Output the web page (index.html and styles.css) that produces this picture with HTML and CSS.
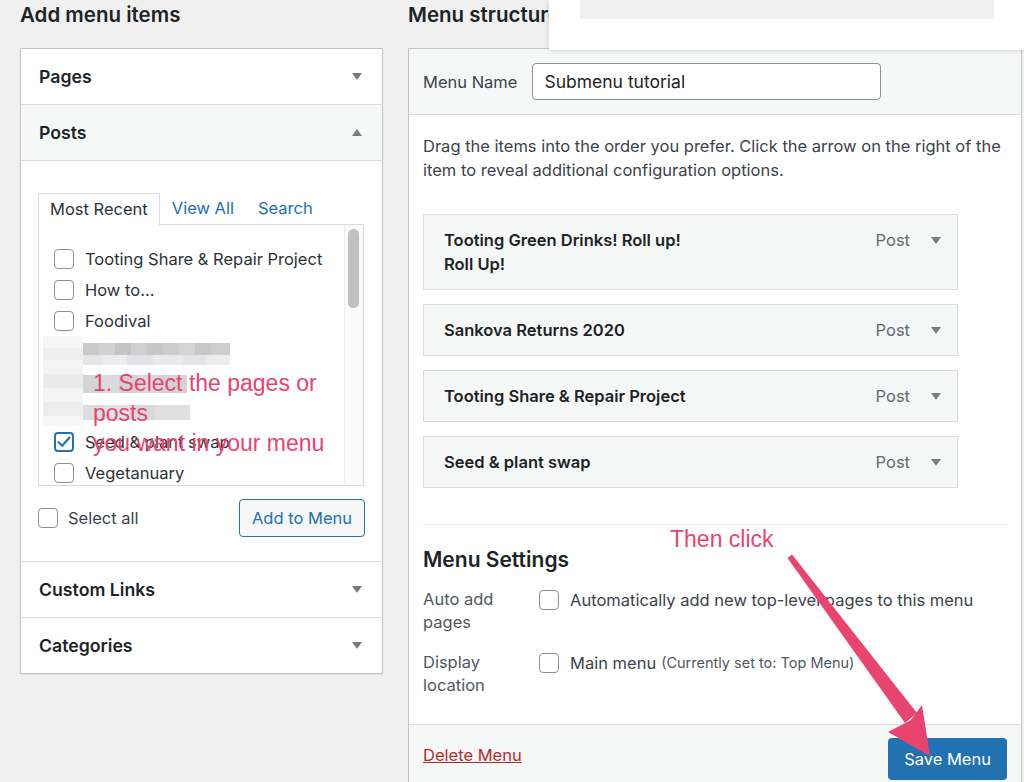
FILE: index.html
```html
<!DOCTYPE html>
<html lang="en-US">

<head>
    <meta charset="UTF-8">
    <meta name="viewport" content="width=device-width, initial-scale=1">
    <title>Menus</title>
    <link rel="stylesheet" href="styles.css">
</head>

<body>
    <div class="page">
        <div class="col-left">
            <h2 class="col-title">Add menu items</h2>
            <div class="accordion">
                <div class="acc-section">
                    <div class="acc-head">
                        <h3>Pages</h3>
                        <span class="tri tri-down"></span>
                    </div>
                </div>
                <div class="acc-section open">
                    <div class="acc-head">
                        <h3>Posts</h3>
                        <span class="tri tri-up"></span>
                    </div>
                    <div class="acc-body">
                        <ul class="tabs">
                            <li class="tab active">Most Recent</li>
                            <li class="tab">View All</li>
                            <li class="tab">Search</li>
                        </ul>
                        <div class="post-list">
                            <div class="post-items">
                                <label class="post-item"><span class="cb"></span>Tooting Share &amp; Repair Project</label>
                                <label class="post-item"><span class="cb"></span>How to…</label>
                                <label class="post-item"><span class="cb"></span>Foodival</label>
                                <div class="blurred">
                                    <div class="blur-side"></div>
                                    <div class="blur-bars">
                                        <div class="blur-bar bar-one"></div>
                                        <div class="blur-bar bar-one-light"></div>
                                        <div class="blur-bar bar-two"></div>
                                        <div class="blur-bar bar-three"></div>
                                    </div>
                                </div>
                                <label class="post-item">
                                    <span class="cb checked">
                                        <svg width="16" height="16" viewBox="0 0 16 16"><path d="M2.5 8.2 L6.2 11.8 L13.5 3.6" fill="none" stroke="#2271b1" stroke-width="2.2" stroke-linecap="round" stroke-linejoin="round"/></svg>
                                    </span>Seed &amp; plant swap
                                </label>
                                <label class="post-item"><span class="cb"></span>Vegetanuary</label>
                            </div>
                            <div class="scroll-track">
                                <div class="scroll-thumb"></div>
                            </div>
                            <p class="note note-select">1. Select the pages or posts<br>you want in your menu</p>
                        </div>
                        <div class="list-actions">
                            <label class="select-all"><span class="cb"></span>Select all</label>
                            <button class="add-btn">Add to Menu</button>
                        </div>
                    </div>
                </div>
                <div class="acc-section">
                    <div class="acc-head">
                        <h3>Custom Links</h3>
                        <span class="tri tri-down"></span>
                    </div>
                </div>
                <div class="acc-section last">
                    <div class="acc-head">
                        <h3>Categories</h3>
                        <span class="tri tri-down"></span>
                    </div>
                </div>
            </div>
        </div>

        <div class="col-right">
            <h2 class="col-title">Menu structure</h2>
            <div class="menu-panel">
                <div class="menu-head">
                    <label class="menu-label">Menu Name</label>
                    <input class="menu-name" type="text" value="Submenu tutorial">
                </div>
                <div class="menu-body">
                    <p class="drag-hint">Drag the items into the order you prefer. Click the arrow on the right of the item to reveal additional configuration options.</p>
                    <ul class="menu-items">
                        <li class="menu-item">
                            <span class="item-title">Tooting Green Drinks! Roll up! Roll Up!</span>
                            <span class="item-controls"><span class="item-type">Post</span><span class="tri tri-down"></span></span>
                        </li>
                        <li class="menu-item">
                            <span class="item-title">Sankova Returns 2020</span>
                            <span class="item-controls"><span class="item-type">Post</span><span class="tri tri-down"></span></span>
                        </li>
                        <li class="menu-item">
                            <span class="item-title">Tooting Share &amp; Repair Project</span>
                            <span class="item-controls"><span class="item-type">Post</span><span class="tri tri-down"></span></span>
                        </li>
                        <li class="menu-item">
                            <span class="item-title">Seed &amp; plant swap</span>
                            <span class="item-controls"><span class="item-type">Post</span><span class="tri tri-down"></span></span>
                        </li>
                    </ul>
                    <div class="menu-settings">
                        <h3>Menu Settings</h3>
                        <div class="setting-row">
                            <div class="setting-label">Auto add pages</div>
                            <label class="setting-input"><span class="cb"></span>Automatically add new top-level pages to this menu</label>
                        </div>
                        <div class="setting-row">
                            <div class="setting-label">Display location</div>
                            <label class="setting-input"><span class="cb"></span>Main menu <span class="setting-note">(Currently set to: Top Menu)</span></label>
                        </div>
                    </div>
                </div>
                <div class="menu-foot">
                    <a class="delete-link" href="#">Delete Menu</a>
                    <button class="save-btn">Save Menu</button>
                </div>
            </div>
        </div>

        <div class="popover">
            <div class="popover-bar"></div>
        </div>

        <p class="note note-click">Then click</p>

        <svg class="pointer-arrow" width="1024" height="782" viewBox="0 0 1024 782">
            <polygon points="787.5,558 792,554.5 917,713 905,723" fill="#e9446f"/>
            <polygon points="888,732 911,720 922,705 930,756" fill="#e9446f"/>
        </svg>
    </div>
</body>

</html>
```

FILE: styles.css
```css
body,
html {
    margin: 0;
    height: 100%;
}

body {
    background: #f0f0f1;
    color: #3c434a;
    font-family: Inter, "Noto Sans", sans-serif;
    font-size: 16.5px;
    overflow: hidden;
}

.page {
    position: relative;
    display: flex;
    gap: 25px;
    padding-left: 20px;
    height: 782px;
}

.col-left {
    width: 363px;
    flex-shrink: 0;
}

.col-right {
    flex: 1;
    margin-right: 2px;
}

.col-title {
    margin: 0;
    height: 48px;
    line-height: 30px;
    font-size: 20.5px;
    font-weight: 600;
    color: #1d2327;
}

/* left accordion */

.accordion {
    background: #fff;
    border: 1px solid #c3c4c7;
    box-shadow: 0 1px 1px rgba(0, 0, 0, 0.05);
}

.acc-head {
    display: flex;
    justify-content: space-between;
    align-items: center;
    height: 55px;
    padding: 0 20px 0 18px;
    border-bottom: 1px solid #dcdcde;
}

.last .acc-head {
    border-bottom: none;
}

.open .acc-head {
    background: #f6f7f7;
}

.acc-head h3 {
    margin: 0;
    font-size: 17.7px;
    font-weight: 600;
    color: #1d2327;
}

.tri {
    width: 0;
    height: 0;
    border-left: 5px solid transparent;
    border-right: 5px solid transparent;
}

.tri-down {
    border-top: 7px solid #787c82;
}

.tri-up {
    border-bottom: 7px solid #787c82;
}

.acc-body {
    padding: 32px 18px 24px 17px;
    border-bottom: 1px solid #dcdcde;
}

.tabs {
    display: flex;
    list-style: none;
    margin: 0 0 -1px;
    padding: 0;
    position: relative;
    z-index: 1;
}

.tab {
    box-sizing: border-box;
    height: 32px;
    line-height: 31px;
    padding: 0 12px;
    color: #2271b1;
}

.tab.active {
    padding: 0 11px;
    color: #2c3338;
    background: #fff;
    border: 1px solid #dcdcde;
    border-bottom: none;
}

.post-list {
    position: relative;
    display: flex;
    box-sizing: border-box;
    height: 262px;
    border: 1px solid #dcdcde;
    overflow: hidden;
}

.post-items {
    flex: 1;
    padding: 18px 0 0 15px;
}

.post-item,
.select-all,
.setting-input {
    display: flex;
    align-items: center;
    gap: 11px;
}

.post-item {
    height: 31px;
    color: #2c3338;
}

.cb {
    box-sizing: border-box;
    width: 20px;
    height: 20px;
    flex-shrink: 0;
    display: flex;
    align-items: center;
    justify-content: center;
    background: #fff;
    border: 1px solid #8c8f94;
    border-radius: 4px;
}

.cb.checked {
    border: 2px solid #2271b1;
}

.blurred {
    display: flex;
    height: 90px;
    margin-left: -11px;
}

.blur-side {
    width: 40px;
    height: 90px;
    background: linear-gradient(180deg, #f6f6f7 0 12px, #eeeeef 12px 24px, #f3f3f4 24px 38px, #ebebec 38px 52px, #f4f4f5 52px 66px, #ededee 66px 80px, #f7f7f8 80px);
}

.blur-bars {
    display: flex;
    flex-direction: column;
}

.blur-bar {
    width: 147px;
}

.bar-one {
    margin-top: 7px;
    height: 12px;
    background: linear-gradient(90deg, #c9c9cb 0 16px, #d1d1d3 16px 32px, #c5c5c7 32px 48px, #cfcfd1 48px 64px, #c7c7c9 64px 80px, #cdcdcf 80px 96px, #d4d4d6 96px 112px, #c8c8ca 112px 128px, #cecece 128px);
}

.bar-one-light {
    height: 10px;
    background: linear-gradient(90deg, #e6e6e8 0 20px, #ececee 20px 44px, #e3e3e5 44px 70px, #eaeaec 70px 100px, #e5e5e7 100px 124px, #ededef 124px);
}

.bar-two {
    margin-top: 10px;
    width: 104px;
    height: 18px;
    background: linear-gradient(90deg, #d5d5d7 0 18px, #dcdcde 18px 36px, #d1d1d3 36px 56px, #d9d9db 56px 78px, #d3d3d5 78px);
}

.bar-three {
    margin-top: 12px;
    width: 107px;
    height: 15px;
    background: linear-gradient(90deg, #dcdcde 0 22px, #e2e2e4 22px 46px, #d8d8da 46px 72px, #e0e0e2 72px);
}

.scroll-track {
    box-sizing: border-box;
    width: 19px;
    padding: 4px 0 0 3px;
    background: #fafafa;
    border-left: 1px solid #ededed;
}

.scroll-thumb {
    width: 11px;
    height: 79px;
    border-radius: 6px;
    background: #c1c1c1;
}

.note {
    margin: 0;
    color: #e9446f;
    font-family: "Liberation Sans", Arial, sans-serif;
    font-size: 23px;
    line-height: 30px;
}

.note-select {
    position: absolute;
    left: 54px;
    top: 143px;
    width: 240px;
}

.note-click {
    position: absolute;
    left: 670px;
    top: 524px;
}

.list-actions {
    display: flex;
    justify-content: space-between;
    align-items: center;
    margin-top: 13px;
}

.select-all {
    gap: 10px;
    color: #3c434a;
}

.add-btn {
    height: 38px;
    padding: 0 12px;
    background: #f6f7f7;
    border: 1px solid #2271b1;
    border-radius: 4px;
    color: #2271b1;
    font-family: inherit;
    font-size: 16.5px;
    margin-right: -1px;
}

/* right panel */

.menu-panel {
    background: #fff;
    border: 1px solid #c3c4c7;
}

.menu-head {
    display: flex;
    align-items: center;
    gap: 15px;
    padding: 14px;
    background: #f6f7f7;
    border-bottom: 1px solid #dcdcde;
}

.menu-label {
    color: #3c434a;
}

.menu-name {
    box-sizing: border-box;
    width: 349px;
    height: 37px;
    padding: 0 11px;
    border: 1px solid #8c8f94;
    border-radius: 4px;
    font-family: inherit;
    font-size: 17.5px;
    color: #1d2327;
}

.menu-body {
    padding: 19px 14px 0;
}

.drag-hint {
    margin: 0;
    line-height: 24px;
}

.menu-items {
    display: flex;
    flex-direction: column;
    gap: 14px;
    list-style: none;
    width: 535px;
    margin: 32px 0 0;
    padding: 0;
}

.menu-item {
    display: flex;
    justify-content: space-between;
    align-items: flex-start;
    padding: 13px 16px 13px 20px;
    line-height: 24px;
    background: #f6f7f7;
    border: 1px solid #dcdcde;
}

.item-title {
    max-width: 255px;
    font-weight: 600;
    color: #1d2327;
}

.item-controls {
    display: flex;
    align-items: center;
    gap: 21px;
    height: 24px;
    color: #646970;
}

.menu-settings {
    margin-top: 36px;
    padding-bottom: 27px;
    border-top: 1px solid #ececed;
}

.menu-settings h3 {
    margin: 20px 0 13px;
    font-size: 21px;
    font-weight: 600;
    line-height: 30px;
    color: #1d2327;
}

.setting-row {
    display: flex;
    align-items: flex-start;
    margin-bottom: 17px;
}

.setting-row:last-child {
    margin-bottom: 0;
}

.setting-label {
    width: 100px;
    margin-right: 16px;
    line-height: 23px;
    color: #50575e;
}

.setting-input {
    height: 23px;
    color: #3c434a;
}

.setting-note {
    margin-left: -6px;
    font-size: 14.5px;
    color: #50575e;
}

.menu-foot {
    display: flex;
    justify-content: space-between;
    align-items: center;
    padding: 13px 14px;
    background: #f6f7f7;
    border-top: 1px solid #dcdcde;
}

.delete-link {
    margin-top: -8px;
    color: #b32d2e;
}

.save-btn {
    height: 42px;
    padding: 0 16px;
    background: #2271b1;
    border: none;
    border-radius: 4px;
    color: #fff;
    font-family: inherit;
    font-size: 16.5px;
}

/* overlays */

.popover {
    position: absolute;
    left: 549px;
    top: 0;
    width: 475px;
    height: 50px;
    background: #fff;
    box-shadow: 0 1px 5px rgba(0, 0, 0, 0.14);
}

.popover-bar {
    height: 19px;
    margin: 0 30px 0 31px;
    background: #f0f0f1;
}

.pointer-arrow {
    position: absolute;
    left: 0;
    top: 0;
    pointer-events: none;
}
```
